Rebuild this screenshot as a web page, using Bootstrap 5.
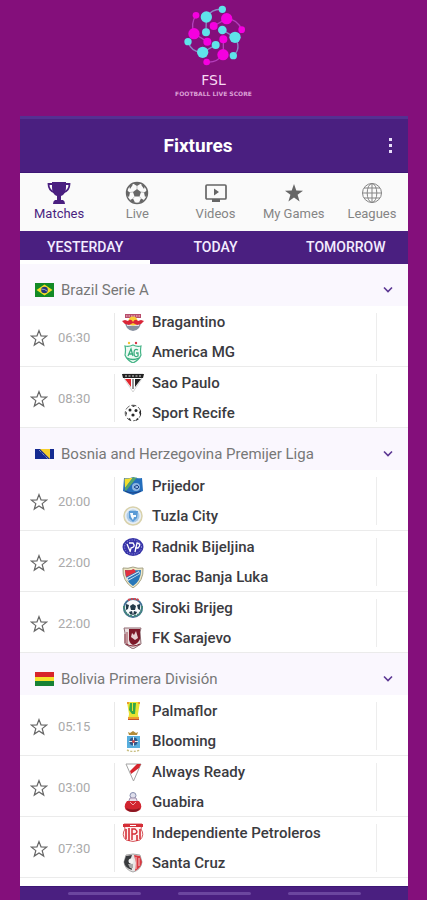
<!DOCTYPE html>
<html lang="en">
<head>
<meta charset="utf-8">
<meta name="viewport" content="width=device-width, initial-scale=1">
<title>FSL - Fixtures</title>
<link href="https://cdn.jsdelivr.net/npm/bootstrap@5.3.0/dist/css/bootstrap.min.css" rel="stylesheet">
<style>
:root { --violet: #4a1f80; --plum: #840f7b; }
body { background: var(--plum); font-family: Roboto, "Liberation Sans", sans-serif; }
svg { display: block; flex: none; }
.brand { height: 116px; padding-top: 4px; color: #f6d9f3; }
.brand-name { font: 400 14px/16px "DejaVu Sans", sans-serif; margin-top: 4px; }
.brand-tag { font: 700 6px/8px "DejaVu Sans", sans-serif; color: #dba0d5; margin-top: 2px; }
.screen { margin: 0 19px 0 20px; background: #fff; overflow: hidden; }
.app-bar { display: grid; grid-template-columns: 36px 1fr 36px; height: 57px; background: var(--violet); border-top: 3px solid #543092; border-bottom: 1px solid #3d1675; color: #fff; }
.app-title { font-size: 19px; line-height: 24px; font-weight: 700; padding-right: 0; }
.plain { background: none; border: 0; padding: 0; color: inherit; }
.sections { height: 58px; background: #fafafa; margin-right: -3px; }
.sections a { flex: 1 1 0; color: #858585; font-size: 13px; line-height: 16px; padding-top: 8px; text-decoration: none; }
.sections a.active { color: var(--violet); }
.sections svg { margin-bottom: 1px; }
.days { height: 33px; background: var(--violet); margin-right: -3px; }
.days a { flex: 1 1 0; color: #f3ecff; font-size: 14px; line-height: 25px; padding-top: 4px; font-weight: 500; text-align: center; text-decoration: none; border-bottom: 4px solid transparent; }
.days a.active { border-bottom-color: #fff; }
.league { height: 42px; background: #faf7fe; padding: 10px 14px 0 15px; gap: 7px; font-size: 15px; color: #777; text-align: left; }
.league .title { line-height: 32px; font-weight: 400; font-size: inherit; }
.fixture { padding-top: 3px; border-bottom: 1px solid #ebebeb; }
.star { width: 18px; margin-left: 10px; color: #666; }
.kickoff { width: 66px; padding-left: 10px; font-size: 13px; color: #aaa; }
.sides { border-left: 1px solid #e9e9e9; border-right: 1px solid #ededed; margin: 4px 31px 5px 0; padding-left: 7px; height: 48px; }
.team { height: 30px; flex: none; gap: 8px; font-size: 15px; font-weight: 500; color: #3b3b3f; line-height: 26px; }
.bottom-bar { margin-top: 8px; height: 14px; background: var(--violet); border-top: 1px solid #3d1675; padding-top: 5px; gap: 37px; }
.bottom-bar span { width: 73px; height: 3px; border-radius: 2px; background: #6c469f; }
</style>
<script src="https://cdn.jsdelivr.net/npm/bootstrap@5.3.0/dist/js/bootstrap.bundle.min.js"></script>
</head>
<body>
<svg width="0" height="0" class="position-absolute" aria-hidden="true">
  <symbol id="star" viewBox="0 0 18 18"><path d="M9 1.600l2 5.200 5.600.3-4.400 3.500 1.500 5.400L9 12.900 4.300 16l1.500-5.400L1.400 7.100l5.600-.3z" fill="none" stroke="currentColor" stroke-width="1.200"/></symbol>
  <symbol id="down" viewBox="0 0 12 12"><path d="M2 3.500l4 4 4-4" fill="none" stroke="#5b3693" stroke-width="1.600"/></symbol>
</svg>

<header class="brand d-flex flex-column align-items-center">
  <svg width="62" height="64" viewBox="66 12 186 192" aria-hidden="true">
    <g fill="none" stroke="#b43fbc" stroke-width="4"><path d="M158 78L197 56Q230 58 242 89M105 46Q88 70 99 101L139 125M187 118V164Q165 190 137 186"/><path stroke="#8b85c5" d="M184 28Q155 25 136 51L135 97M184 90L222 112Q242 145 217 167M81 125Q92 158 125 157L164 135"/></g>
    <g fill="#f500df"><circle cx="105" cy="46" r="10"/><circle cx="197" cy="56" r="17"/><circle cx="242" cy="89" r="10"/><circle cx="158" cy="78" r="12"/><circle cx="99" cy="101" r="17"/><circle cx="139" cy="125" r="12"/><circle cx="187" cy="118" r="12"/><circle cx="186" cy="164" r="17"/><circle cx="137" cy="186" r="10"/></g>
    <g fill="#5fe3ea"><circle cx="136" cy="51" r="17"/><circle cx="184" cy="28" r="11"/><circle cx="135" cy="97" r="12"/><circle cx="184" cy="90" r="13"/><circle cx="222" cy="112" r="17"/><circle cx="217" cy="167" r="11"/><circle cx="81" cy="125" r="11"/><circle cx="125" cy="157" r="17"/><circle cx="164" cy="135" r="12"/></g>
  </svg>
  <div class="brand-name">FSL</div>
  <div class="brand-tag">FOOTBALL LIVE SCORE</div>
</header>

<main class="screen">
  <div class="app-bar align-items-center">
    <span></span>
    <h1 class="app-title text-center mb-0 pe-4 me-2">Fixtures</h1>
    <button class="plain" type="button" aria-label="More options"><svg width="36" height="20" viewBox="0 0 36 20" fill="#e9defa"><rect x="17" y="2" width="3" height="3"/><rect x="17" y="8" width="3" height="3"/><rect x="17" y="14" width="3" height="3"/></svg></button>
  </div>

  <nav class="sections d-flex" aria-label="Sections">
    <a class="active d-flex flex-column align-items-center" href="#matches" aria-current="page">
      <svg width="24" height="24" viewBox="0 0 24 24"><path fill="#4a1f80" d="M5 1h14v5c0 5-2 8-5 9v4h2q2 1 2 4H6q0-3 2-4h2v-4C7 14 5 11 5 6z"/><path d="M6 3H1.500q0 7 7 9M18 3h4.500q0 7-7 9" fill="none" stroke="#4a1f80" stroke-width="1.800"/></svg>
      Matches</a>
    <a class="d-flex flex-column align-items-center" href="#live">
      <svg width="24" height="24" viewBox="0 0 24 24"><circle cx="12" cy="12" r="10.500" fill="none" stroke="#666" stroke-width="1.400"/><g fill="#666"><path d="M12 8l4 3-1.500 4.500h-5L8 11z"/><path d="M8 2.500L12 5l4-2.500-4-1zM2 9.500l3 2-1 4.500-2.500-2zM22 9.500l-3 2 1 4.500 2.500-2zM5 19l3-1.500 2 4-3-.5zM19 19l-3-1.500-2 4 3-.5zM4 4.500l4-1-3 4.500zM20 4.500l-4-1L19 8z"/></g><path d="M12 5v3M5 11.500l3-.5M19 11.500l-3-.5M8 17.500l1.500-2M16 17.500l-1.500-2" stroke="#aaa" stroke-width=".7"/></svg>
      Live</a>
    <a class="d-flex flex-column align-items-center" href="#videos">
      <svg width="24" height="24" viewBox="0 0 24 24"><rect x="2" y="4" width="20" height="14" rx="1" fill="none" stroke="#666" stroke-width="1.700"/><path fill="#666" d="M10 7.500l5 3.500-5 3.500zM8 18h8v3H8z"/></svg>
      Videos</a>
    <a class="d-flex flex-column align-items-center" href="#my-games">
      <svg width="24" height="24" viewBox="0 0 24 24"><path fill="#666" d="M12 3l2.300 6.500 6.700.2-5.400 4 2 6.800-5.600-4-5.600 4 2-6.800-5.400-4 6.700-.2z"/></svg>
      My Games</a>
    <a class="d-flex flex-column align-items-center" href="#leagues">
      <svg width="24" height="24" viewBox="0 0 24 24" fill="none" stroke="#858585"><circle cx="12" cy="12" r="9.500"/><ellipse cx="12" cy="12" rx="4.800" ry="9.500"/><path d="M12 2.500v19M2.500 12h19M4 7h16M4 17h16"/></svg>
      Leagues</a>
  </nav>

  <nav class="days d-flex" aria-label="Day">
    <a class="active" href="#yesterday" aria-current="true">YESTERDAY</a>
    <a href="#today">TODAY</a>
    <a href="#tomorrow">TOMORROW</a>
  </nav>

  <section>
    <button class="league plain w-100 d-flex align-items-center" type="button" aria-expanded="true">
      <svg width="19" height="14" viewBox="0 0 19 14"><path fill="#138a26" d="M0 0h19v14H0z"/><path fill="#f4dc26" d="M9.500 1.500L17.500 7l-8 5.500L1.500 7z"/><circle cx="9.500" cy="7" r="3.300" fill="#23377d"/><path d="M6.500 6.200q3-.5 5.700 2" stroke="#d5dbd8" stroke-width=".7" fill="none"/></svg>
      <span class="title flex-grow-1">Brazil Serie A</span>
      <svg width="12" height="12"><use href="#down"/></svg>
    </button>
    <div class="fixture d-flex">
      <button class="plain star" type="button" aria-label="Follow Bragantino v America MG"><svg width="18" height="18"><use href="#star"/></svg></button>
      <time class="kickoff align-self-center">06:30</time>
      <div class="sides flex-grow-1 d-flex flex-column justify-content-center">
        <div class="team d-flex align-items-center"><svg width="22" height="22" viewBox="0 0 22 22"><path fill="#8790a0" d="M3 10h16q0 9-8 10-8-1-8-10z"/><path fill="#dfe2e7" d="M5 13h12v2H5z"/><path fill="#b84d6b" d="M3 3h16v4H3z"/><path d="M4 5h14" stroke="#f2cbd3" stroke-dasharray="1.500 1"/><circle cx="11" cy="10" r="4.500" fill="#f9cd35"/><path fill="#d92638" d="M0 10l3-1 3 1q3-3 5 1 2-4 5-1l3-1 3 1-3 3-4 1-4-2-4 2-4-1z"/></svg>Bragantino</div>
        <div class="team d-flex align-items-center"><svg width="22" height="22" viewBox="0 0 22 22"><circle cx="7" cy="2" r="1.200" fill="#f2c335"/><circle cx="14" cy="2" r="1.200" fill="#d93445"/><path fill="#eefaf4" stroke="#45b487" stroke-width="1.200" d="M3 5q4 1 8-1 4 2 8 1-1 5 0 9-2 5-8 8-6-3-8-8 1-5 0-9z"/><path fill="none" stroke="#39ad7d" stroke-width="1.300" d="M6 15L9 8l2 7M7 13h4M16 9q-4-2-4 3t4 3v-3h-2M5 17q6 3 12 0"/></svg>America MG</div>
      </div>
    </div>
    <div class="fixture d-flex">
      <button class="plain star" type="button" aria-label="Follow Sao Paulo v Sport Recife"><svg width="18" height="18"><use href="#star"/></svg></button>
      <time class="kickoff align-self-center">08:30</time>
      <div class="sides flex-grow-1 d-flex flex-column justify-content-center">
        <div class="team d-flex align-items-center"><svg width="22" height="22" viewBox="0 0 22 22"><path fill="#fff" stroke="#bbb" stroke-width=".6" d="M1 2h20l-2 6-8 12L3 8z"/><path fill="#222" d="M0 2h22l-1 4H1z"/><path d="M3 4h16" stroke="#ddd" stroke-dasharray="2 1.500"/><path fill="#e1262e" d="M3 7h6v8z"/><path fill="#222" d="M13 7h6l-6 8z"/><path fill="#333" d="M10.500 7h1v10h-1z"/></svg>Sao Paulo</div>
        <div class="team d-flex align-items-center"><svg width="22" height="22" viewBox="0 0 22 22"><circle cx="11" cy="11" r="7.800" fill="#fff" stroke="#666" stroke-dasharray="5 2"/><g fill="#292929"><path d="M9 3.500h5L11.500 5zM3.500 9L5 11l-1 3zM19 8l-2 2 1 3 1 1zM6 17l2-1 1 3zM17 17l-2-1-1 3z"/><circle cx="8" cy="8" r="1.500"/><circle cx="14" cy="8.500" r="1.500"/><circle cx="11" cy="13" r="1.600"/></g></svg>Sport Recife</div>
      </div>
    </div>
  </section>

  <section>
    <button class="league plain w-100 d-flex align-items-center" type="button" aria-expanded="true">
      <svg width="19" height="14" viewBox="0 0 19 14"><path fill="#142a91" d="M0 2h19v10H0z"/><path fill="#f5cf2c" d="M5 2h10v10z"/><path d="M4 3l9 9" stroke="#b3bde0" stroke-dasharray="1 1"/></svg>
      <span class="title flex-grow-1">Bosnia and Herzegovina Premijer Liga</span>
      <svg width="12" height="12"><use href="#down"/></svg>
    </button>
    <div class="fixture d-flex">
      <button class="plain star" type="button" aria-label="Follow Prijedor v Tuzla City"><svg width="18" height="18"><use href="#star"/></svg></button>
      <time class="kickoff align-self-center">20:00</time>
      <div class="sides flex-grow-1 d-flex flex-column justify-content-center">
        <div class="team d-flex align-items-center"><svg width="22" height="22" viewBox="0 0 22 22"><path fill="#246ebc" d="M2 3q5 1 9-1 4 2 9 1l1 13q-4 2-10 4-6-2-10-4z"/><path fill="#f4df2c" d="M2.500 3.500Q7 4 11 2.500L3 13z"/><path fill="#55a56b" d="M11 2.500h4L3 17v-4z"/><circle cx="14" cy="12" r="4" fill="#8cb5e2"/><path d="M12 12l3-2 2 2-2 2zM3 16q8 4 16 0" fill="none" stroke="#1c4187"/></svg>Prijedor</div>
        <div class="team d-flex align-items-center"><svg width="22" height="22" viewBox="0 0 22 22"><circle cx="11" cy="11" r="9" fill="#e8eef4" stroke="#d9d2ac" stroke-width="1.500"/><circle cx="11" cy="11" r="6.500" fill="#aacbe8"/><path fill="#5a9ad6" d="M7 6h9l-1 7-4 4-4-4z"/><path fill="#f6fafe" d="M8 8h3v2h3v2h-2l-1 3-2-3z"/></svg>Tuzla City</div>
      </div>
    </div>
    <div class="fixture d-flex">
      <button class="plain star" type="button" aria-label="Follow Radnik Bijeljina v Borac Banja Luka"><svg width="18" height="18"><use href="#star"/></svg></button>
      <time class="kickoff align-self-center">22:00</time>
      <div class="sides flex-grow-1 d-flex flex-column justify-content-center">
        <div class="team d-flex align-items-center"><svg width="22" height="22" viewBox="0 0 22 22"><ellipse cx="11" cy="11" rx="10.500" ry="9" fill="#3835a8"/><ellipse cx="11" cy="11" rx="8.500" ry="7" fill="none" stroke="#9b9ce3" stroke-dasharray="1 1.500"/><path d="M7 7h4q3 4-2 5l-1 4M13 16l2-9q5 1 1 5h-3M5 8l3 7" fill="none" stroke="#fff" stroke-width="1.300"/></svg>Radnik Bijeljina</div>
        <div class="team d-flex align-items-center"><svg width="22" height="22" viewBox="0 0 22 22"><path fill="#eee7c5" stroke="#a4a184" d="M1 2q5 1 10-1 5 2 10 1 1 13-10 20Q0 15 1 2z"/><path fill="#2877b9" d="M3 4q8 1 8-1 0 2 8 1 0 11-8 16Q3 15 3 4z"/><path fill="#e3313e" d="M3 4q5 1 9-1l2 3-10 5z"/><path fill="#e7f1f6" d="M4 12l13-7 1 3-12 7z"/><path d="M6 13l11-6" stroke="#2877b9" stroke-width="1.600"/></svg>Borac Banja Luka</div>
      </div>
    </div>
    <div class="fixture d-flex">
      <button class="plain star" type="button" aria-label="Follow Siroki Brijeg v FK Sarajevo"><svg width="18" height="18"><use href="#star"/></svg></button>
      <time class="kickoff align-self-center">22:00</time>
      <div class="sides flex-grow-1 d-flex flex-column justify-content-center">
        <div class="team d-flex align-items-center"><svg width="22" height="22" viewBox="0 0 22 22"><circle cx="11" cy="11" r="9" fill="#f8fafc" stroke="#427094" stroke-width="2"/><path d="M6 3l3-1h5l3 1" stroke="#d6454f" stroke-width="2" stroke-dasharray="2 1" fill="none"/><path d="M2 9q0 9 8 10M20 9q0 9-8 10" fill="none" stroke="#448978" stroke-width="2" stroke-dasharray="2 1"/><g fill="#213949"><path d="M11 7l3 2-1 4H9L8 9z"/><path d="M4 7l3 1-1 4-2 1zM18 7l-3 1 1 4 2 1zM7 15l3-1 1 4-3-1zM15 15l-3-1-1 4 3-1z"/></g></svg>Siroki Brijeg</div>
        <div class="team d-flex align-items-center"><svg width="22" height="22" viewBox="0 0 22 22"><path fill="#e9dfdf" stroke="#906b72" d="M2 1h17l-1 4 1 12-8 5-8-5V6z"/><path fill="#7d1829" d="M7 2h11v10q-2 5-7 6-3-1-4-5z"/><path d="M3 7v9M5 5v12" stroke="#9b4653"/><path fill="#e7cfd2" d="M9 10l1-4 2 2 2-4 2 7-3 2z"/><path d="M4 17q7 4 14 0" stroke="#7d1829" fill="none"/></svg>FK Sarajevo</div>
      </div>
    </div>
  </section>

  <section>
    <button class="league plain w-100 d-flex align-items-center" type="button" aria-expanded="true">
      <svg width="19" height="14" viewBox="0 0 19 14"><path fill="#d8252b" d="M0 0h19v5H0z"/><path fill="#f5e22c" d="M0 5h19v4H0z"/><path fill="#188235" d="M0 9h19v5H0z"/></svg>
      <span class="title flex-grow-1">Bolivia Primera División</span>
      <svg width="12" height="12"><use href="#down"/></svg>
    </button>
    <div class="fixture d-flex">
      <button class="plain star" type="button" aria-label="Follow Palmaflor v Blooming"><svg width="18" height="18"><use href="#star"/></svg></button>
      <time class="kickoff align-self-center">05:15</time>
      <div class="sides flex-grow-1 d-flex flex-column justify-content-center">
        <div class="team d-flex align-items-center"><svg width="22" height="22" viewBox="0 0 22 22"><path fill="#e8e332" d="M5 2h13l-2 12 1 6H6l1-6z"/><path fill="#36a847" d="M8 3h2v8h1V3h3l-1 11h-3L7 10z"/><path fill="#ef9b2f" d="M5 2h2v2H5zM16 2h2v2h-2zM6 17h11v3H6z"/><path fill="#c9542a" d="M6 19h11v1H6z"/></svg>Palmaflor</div>
        <div class="team d-flex align-items-center"><svg width="22" height="22" viewBox="0 0 22 22"><path fill="#b28a37" d="M6 2l2 1 3-2 3 2 2-1-1 3H7z"/><path fill="#58aedd" d="M5 6h13v12H5z"/><circle cx="11.500" cy="11.500" r="4" fill="#315a8d"/><path d="M11.500 7v9M7 11.500h9" stroke="#eee"/><circle cx="11.500" cy="11.500" r="1.500" fill="#c9484c"/><path d="M5 20q6 3 13 0" fill="none" stroke="#c8bf83" stroke-width="1.500" stroke-dasharray="2 1.500"/></svg>Blooming</div>
      </div>
    </div>
    <div class="fixture d-flex">
      <button class="plain star" type="button" aria-label="Follow Always Ready v Guabira"><svg width="18" height="18"><use href="#star"/></svg></button>
      <time class="kickoff align-self-center">03:00</time>
      <div class="sides flex-grow-1 d-flex flex-column justify-content-center">
        <div class="team d-flex align-items-center"><svg width="22" height="22" viewBox="0 0 22 22"><path fill="#fff" stroke="#a4a4a4" d="M4 3h15l-7.500 17z"/><path fill="#d5242d" d="M15 3h4l-2 4-8 6-1-3z"/></svg>Always Ready</div>
        <div class="team d-flex align-items-center"><svg width="22" height="22" viewBox="0 0 22 22"><circle cx="11" cy="4.500" r="3" fill="#dfdfec" stroke="#858dad"/><path fill="#e8dfea" stroke="#9f8fab" d="M8 7h6l2 5H6z"/><path fill="#d12530" d="M5 10h12q4 5 1 9-7 4-14 0-3-4 1-9z"/><path fill="#8a1722" d="M4 17q7 3 14 0l-2 3q-5 2-10 0z"/><path d="M8 11l3 3 3-3" stroke="#efa1a5" fill="none"/></svg>Guabira</div>
      </div>
    </div>
    <div class="fixture d-flex">
      <button class="plain star" type="button" aria-label="Follow Independiente Petroleros v Santa Cruz"><svg width="18" height="18"><use href="#star"/></svg></button>
      <time class="kickoff align-self-center">07:30</time>
      <div class="sides flex-grow-1 d-flex flex-column justify-content-center">
        <div class="team d-flex align-items-center"><svg width="22" height="22" viewBox="0 0 22 22"><path fill="#fff1f0" stroke="#d65b60" d="M2 2h18l-1 5q4 6-1 11-7 3-14 0-5-5-1-11z"/><path fill="#d52e37" d="M1 2h20v3H1z"/><path d="M4 7v10M7 6v13M18 7v10M15 13v6" stroke="#d52e37" stroke-width="1.600"/><path d="M10 18V7h3q4 3 0 5h-3" fill="none" stroke="#d52e37" stroke-width="1.500"/><path d="M8 3.500h6" stroke="#fff"/></svg>Independiente Petroleros</div>
        <div class="team d-flex align-items-center"><svg width="22" height="22" viewBox="0 0 22 22"><path fill="#e7e5e5" stroke="#888" stroke-width=".7" d="M4 3q7-2 14 0l2 7q-1 8-9 10-8-2-9-10z"/><path fill="#393b3e" d="M4 4l6-1-2 6 2 9q-7-2-8-8z"/><path fill="#d83a42" d="M12 3l6 1 2 6q-1 6-7 9l1-8z"/><path d="M14 5v12M17 6v8" stroke="#f4c9c9"/><circle cx="9" cy="9" r="2.500" fill="#f4f4f4"/><path fill="#aaa" d="M6 12h5v4H8z"/></svg>Santa Cruz</div>
      </div>
    </div>
  </section>

  <footer class="bottom-bar d-flex justify-content-center"><span></span><span></span><span></span></footer>
</main>
</body>
</html>
